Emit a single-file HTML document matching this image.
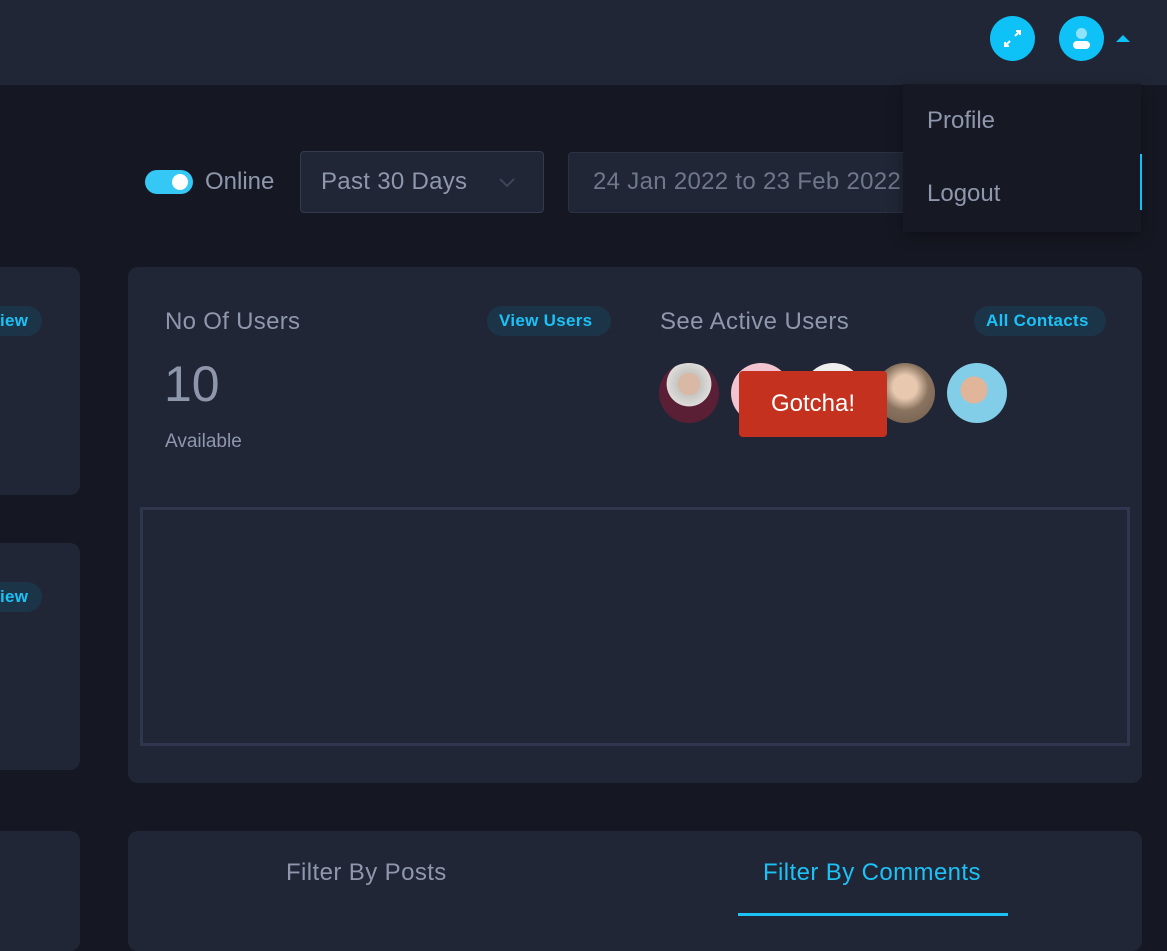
<!DOCTYPE html>
<html><head><style>
*{margin:0;padding:0;box-sizing:border-box}
body{width:1167px;height:916px;background:#151722;font-family:"Liberation Sans",sans-serif;position:relative;overflow:hidden;color:#8f97ad}
.a{position:absolute}
.card{position:absolute;background:#212636;border-radius:10px}
.pill{position:absolute;background:#1c3448;color:#1cc1f5;font-weight:bold;font-size:17px;border-radius:15px;height:30px;line-height:30px;padding:0 12px;letter-spacing:.3px}
.av{position:absolute;width:60px;height:60px;border-radius:50%;top:363px}
</style></head><body>
<div class="a" style="left:0;top:0;width:1167px;height:85px;background:#212636"></div>
<div class="a" style="left:990px;top:16px;width:45px;height:45px;border-radius:50%;background:#0ec1f6">
<svg width="45" height="45" viewBox="0 0 45 45"><path d="M20 25l-5 5M15 26v4h4M25 20l5-5M26 15h4v4" stroke="#fff" stroke-width="2" fill="none"/></svg></div>
<div class="a" style="left:1059px;top:16px;width:45px;height:45px;border-radius:50%;background:#0ec1f6">
<div class="a" style="left:17px;top:12px;width:11px;height:11px;border-radius:50%;background:#8fe2fb"></div>
<div class="a" style="left:14px;top:25px;width:17px;height:8px;border-radius:4px;background:#fff"></div></div>
<div class="a" style="left:1116px;top:35px;width:0;height:0;border-left:7px solid transparent;border-right:7px solid transparent;border-bottom:7px solid #0ec1f6"></div>

<div class="a" style="left:145px;top:170px;width:48px;height:24px;border-radius:12px;background:#35c8f5"><div class="a" style="left:27px;top:4px;width:16px;height:16px;border-radius:50%;background:#fff"></div></div>
<div class="a" style="left:205px;top:168px;font-size:24px">Online</div>
<div class="a" style="left:300px;top:151px;width:244px;height:62px;border:1px solid #353b4f;border-radius:4px;background:#212636"></div>
<div class="a" style="left:321px;top:168px;font-size:24px;letter-spacing:.3px">Past 30 Days</div>
<svg class="a" style="left:498px;top:176px" width="18" height="12"><path d="M2 3l7 7 7-7" stroke="#3e4559" stroke-width="2" fill="none"/></svg>
<div class="a" style="left:568px;top:152px;width:574px;height:61px;border:1px solid #2b3042;border-radius:4px;background:#212636"></div>
<div class="a" style="left:593px;top:168px;font-size:24px;color:#6f778b;letter-spacing:.3px">24 Jan 2022 to 23 Feb 2022</div>

<div class="a" style="left:903px;top:84px;width:238px;height:148px;background:#161823;box-shadow:0 4px 14px rgba(0,0,0,.3)"></div>
<div class="a" style="left:927px;top:107px;font-size:24px">Profile</div>
<div class="a" style="left:927px;top:180px;font-size:24px">Logout</div>
<div class="a" style="left:1140px;top:154px;width:2px;height:56px;background:#0ec1f6"></div>

<div class="card" style="left:-20px;top:267px;width:100px;height:228px"></div>
<div class="pill" style="left:-40px;top:306px;padding-left:40px;padding-right:14px">iew</div>
<div class="card" style="left:-20px;top:543px;width:100px;height:227px"></div>
<div class="pill" style="left:-40px;top:582px;padding-left:40px;padding-right:14px">iew</div>
<div class="card" style="left:-20px;top:831px;width:100px;height:120px"></div>

<div class="card" style="left:128px;top:267px;width:1014px;height:516px"></div>
<div class="a" style="left:165px;top:308px;font-size:24px;letter-spacing:.3px">No Of Users</div>
<div class="pill" style="left:487px;top:306px;width:124px">View Users</div>
<div class="a" style="left:164px;top:355px;font-size:50px;color:#8e96ac">10</div>
<div class="a" style="left:165px;top:431px;font-size:19px">Available</div>
<div class="a" style="left:660px;top:308px;font-size:24px;letter-spacing:.4px">See Active Users</div>
<div class="pill" style="left:974px;top:306px;width:132px">All Contacts</div>
<div class="av" style="left:659px;background:radial-gradient(circle at 50% 35%,#d9b9a6 22%,#c7c5c0 23%,#ddd 45%,#5a1f34 46%)"></div>
<div class="av" style="left:731px;background:#f2c4cf"></div>
<div class="av" style="left:803px;background:#eee"></div>
<div class="av" style="left:875px;background:radial-gradient(circle at 50% 40%,#e8c9b0 25%,#8a7460 50%,#6e5a4a)"></div>
<div class="av" style="left:947px;background:radial-gradient(circle at 45% 45%,#e0b59a 28%,#82cde8 30%)"></div>
<div class="a" style="left:739px;top:371px;width:148px;height:66px;background:#c4321f;border-radius:4px;color:#fff;font-size:24px;text-align:center;line-height:66px">Gotcha!</div>
<div class="a" style="left:140px;top:507px;width:990px;height:239px;border:3px solid #30364e"></div>

<div class="card" style="left:128px;top:831px;width:1014px;height:120px"></div>
<div class="a" style="left:286px;top:859px;font-size:24px;letter-spacing:.4px">Filter By Posts</div>
<div class="a" style="left:763px;top:859px;font-size:24px;color:#1cc1f5;letter-spacing:.4px">Filter By Comments</div>
<div class="a" style="left:738px;top:913px;width:270px;height:3px;background:#1cc1f5"></div>
</body></html>
